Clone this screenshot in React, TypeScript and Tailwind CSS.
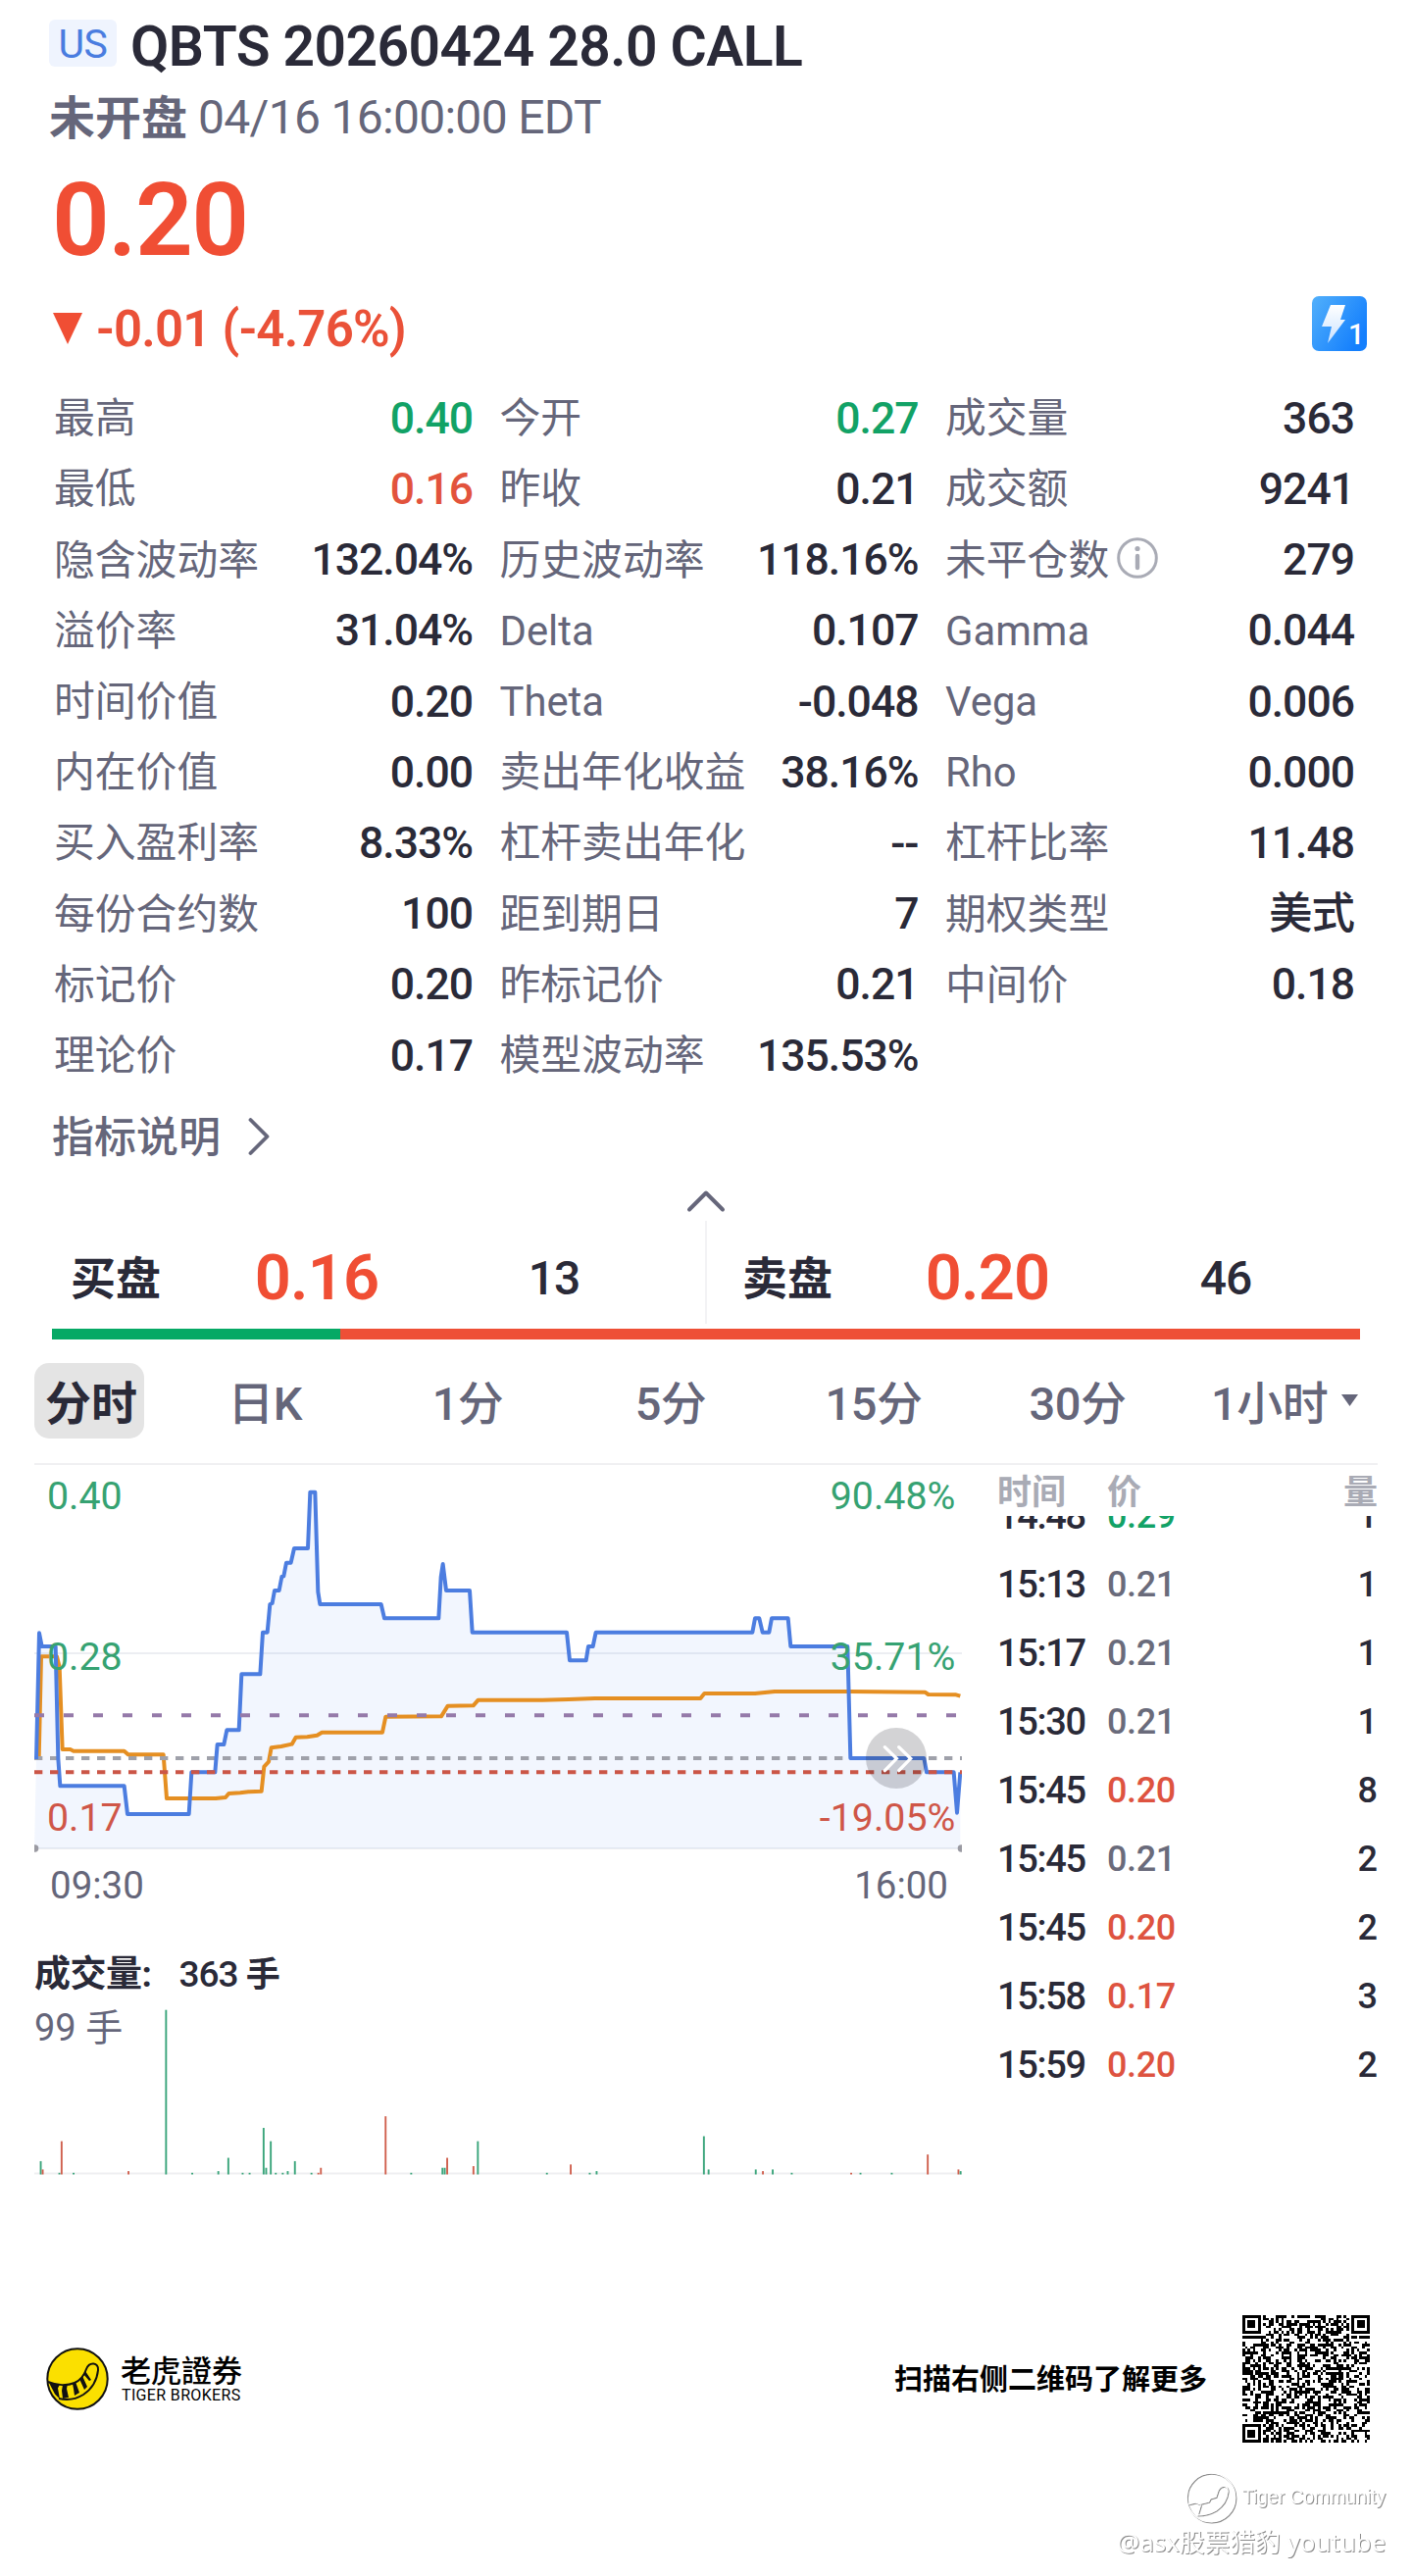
import { ChevronRight, ChevronUp } from "lucide-react";

const stats = [
  ["最高", "0.40", "up"],
  ["今开", "0.27", "up"],
  ["成交量", "363", ""],
  ["最低", "0.16", "down"],
  ["昨收", "0.21", ""],
  ["成交额", "9241", ""],
  ["隐含波动率", "132.04%", ""],
  ["历史波动率", "118.16%", ""],
  ["未平仓数", "279", ""],
  ["溢价率", "31.04%", ""],
  ["Delta", "0.107", ""],
  ["Gamma", "0.044", ""],
  ["时间价值", "0.20", ""],
  ["Theta", "-0.048", ""],
  ["Vega", "0.006", ""],
  ["内在价值", "0.00", ""],
  ["卖出年化收益", "38.16%", ""],
  ["Rho", "0.000", ""],
  ["买入盈利率", "8.33%", ""],
  ["杠杆卖出年化", "--", ""],
  ["杠杆比率", "11.48", ""],
  ["每份合约数", "100", ""],
  ["距到期日", "7", ""],
  ["期权类型", "美式", ""],
  ["标记价", "0.20", ""],
  ["昨标记价", "0.21", ""],
  ["中间价", "0.18", ""],
  ["理论价", "0.17", ""],
  ["模型波动率", "135.53%", ""],
];

const trades = [
  ["14:48", "0.29", "1"],
  ["15:13", "0.21", "1"],
  ["15:17", "0.21", "1"],
  ["15:30", "0.21", "1"],
  ["15:45", "0.20", "8"],
  ["15:45", "0.21", "2"],
  ["15:45", "0.20", "2"],
  ["15:58", "0.17", "3"],
  ["15:59", "0.20", "2"],
];

const priceLine =
  "111,942 120,556 128,597 170,597 178,940 184,1024 380,1024 390,1110 578,1110 586,982 658,982 665,897 685,897 694,853 731,853 739,682 796,682 804,554 818,554 826,468 833,465 840,426 854,426 862,384 868,382 876,341 890,341 900,297 942,297 949,125 964,125 973,430 979,468 1166,468 1176,511 1342,511 1349,385 1355,345 1365,426 1437,426 1445,554 1734,554 1743,640 1793,640 1800,597 1814,597 1823,554 2302,554 2310,511 2323,511 2333,554 2353,554 2361,511 2411,511 2419,597 2593,597 2602,939 2827,939 2835,982 2918,982 2928,1106 2938,982";

const avgLine =
  "119,940 126,628 174,628 182,660 191,912 215,912 225,917 380,917 392,928 500,928 510,1062 660,1062 690,1059 700,1047 735,1045 760,1042 800,1040 808,965 822,950 830,907 860,903 893,896 905,875 940,874 970,869 985,860 1170,860 1180,812 1350,811 1370,779 1448,778 1463,761 1660,761 1740,759 1820,756 2143,756 2155,741 2310,741 2370,735 2600,735 2830,737 2840,744 2925,745 2938,749";

// [x, volume, 1 = up / 0 = down]
const volumes = [
  [41.5, 8, 1], [43.5, 3, 0], [60.5, 1, 1], [62.8, 20, 0], [75, 1, 1],
  [131, 2, 0], [169.3, 99, 1], [196, 1, 1], [222.6, 2, 1], [232.8, 10, 1],
  [247.4, 1, 1], [254.5, 1, 1], [268.8, 28, 1], [271.4, 4, 1], [276.1, 20, 1],
  [281.2, 1, 1], [288.3, 1, 1], [293.4, 2, 1], [300.7, 8, 1], [317.6, 1, 1],
  [324.6, 1, 0], [327.2, 4, 0], [393.2, 35, 0], [419.3, 1, 1], [451.2, 4, 1],
  [453.5, 4, 1], [456, 10, 0], [482.8, 5, 0], [487.3, 20, 1], [557.7, 1, 1],
  [582, 6, 0], [601.4, 1, 1], [608.4, 2, 1], [717.8, 23, 1], [722.6, 3, 1],
  [770.7, 3, 1], [778, 2, 0], [788, 3, 1], [807.4, 1, 1], [868, 1, 0],
  [877.5, 1, 1], [909.4, 1, 1], [946.1, 12, 0], [977.4, 3, 0], [979.6, 2, 1],
];

const QR_SIZE = 49;

function finder(x: number, y: number) {
  const ring = Math.max(Math.abs(x - 3), Math.abs(y - 3));
  return ring === 3 || ring < 2;
}

function qrPath() {
  let seed = 20260424;
  let d = "";
  for (let y = 0; y < QR_SIZE; y++) {
    for (let x = 0; x < QR_SIZE; x++) {
      seed = (seed * 1103515245 + 12345) % 2147483648;
      let on = (seed >> 12) % 100 < 50;
      const far = QR_SIZE - 8;
      if (x < 8 && y < 8) on = x < 7 && y < 7 && finder(x, y);
      else if (x >= far && y < 8) on = x > far && y < 7 && finder(x - far - 1, y);
      else if (x < 8 && y >= far) on = x < 7 && y > far && finder(x, y - far - 1);
      if (on) d += `M${x} ${y}h1v1h-1z`;
    }
  }
  return d;
}

function valueColor(dir: string) {
  if (dir === "up") return "text-[#12a266]";
  if (dir === "down") return "text-[#e2533c]";
  return "text-[#2a2a38]";
}

function priceColor(price: string) {
  if (Number(price) > 0.21) return "text-[#12a266]";
  if (Number(price) < 0.21) return "text-[#de5340]";
  return "text-[#6a6b7b]";
}

function InfoIcon() {
  return (
    <svg className="mb-1 ml-2 size-[42px]" viewBox="0 0 42 42" fill="none">
      <circle cx="21" cy="21" r="19.3" stroke="#a9abb5" strokeWidth="3" />
      <circle cx="21" cy="11.5" r="2.6" fill="#a9abb5" />
      <path d="M21 19v12" stroke="#a9abb5" strokeWidth="4.4" strokeLinecap="round" />
    </svg>
  );
}

function BoltBadge() {
  return (
    <svg className="size-14" viewBox="0 0 56 56">
      <defs>
        <linearGradient id="badge" x1="0" y1="0" x2="1" y2="0.6">
          <stop offset="0" stopColor="#52b0fb" />
          <stop offset="1" stopColor="#147ffd" />
        </linearGradient>
        <linearGradient id="bolt" x1="0" y1="0" x2="0" y2="1">
          <stop offset="0" stopColor="#fff" />
          <stop offset="1" stopColor="#c9e2ff" />
        </linearGradient>
      </defs>
      <rect width="56" height="56" rx="7" fill="url(#badge)" />
      <path d="M19 9h15l-5 15h5L16 48l4-17h-10z" fill="url(#bolt)" />
      <text x="37" y="49" fontSize="29" fontWeight="500" fill="#fff" letterSpacing="0">
        1
      </text>
    </svg>
  );
}

function PriceChart() {
  return (
    <svg className="block h-[396px] w-[946px]" viewBox="105 42 2838 1188">
      <g stroke="#e6e8ee" strokeWidth="5">
        <path d="M105 618H2943" />
        <path d="M105 1215H2943" />
      </g>
      <polygon points={`105,1215 ${priceLine} 2938,1215`} fill="#4a80f0" fillOpacity="0.075" />
      <circle cx="107" cy="1215" r="11" fill="#9a9aa2" />
      <circle cx="2941" cy="1215" r="11" fill="#9a9aa2" />
      <polyline points={avgLine} fill="none" stroke="#e58f22" strokeWidth="12" strokeLinejoin="round" />
      <path d="M105 939H2943" stroke="#9fa1aa" strokeWidth="12" strokeDasharray="25 23" />
      <polyline points={priceLine} fill="none" stroke="#4c7de0" strokeWidth="12" strokeLinejoin="round" />
      <path d="M105 808H2943" stroke="#957aa9" strokeWidth="12" strokeDasharray="30 60" />
      <path d="M105 982H2943" stroke="#cb5647" strokeWidth="12" strokeDasharray="25 23" />
      <g fontSize="118" fill="#36a272">
        <text x="144" y="177">0.40</text>
        <text x="144" y="668">0.28</text>
        <text x="2923" y="177" textAnchor="end">90.48%</text>
        <text x="2923" y="668" textAnchor="end">35.71%</text>
      </g>
      <g fontSize="118" fill="#cf5648">
        <text x="144" y="1160">0.17</text>
        <text x="2923" y="1160" textAnchor="end">-19.05%</text>
      </g>
      <circle cx="2742" cy="939" r="93" fill="#22222c" fillOpacity="0.2" />
      <path
        d="M2707 905l36 35-36 37M2750 905l36 35-36 37"
        fill="none"
        stroke="#fff"
        strokeWidth="10"
        strokeLinecap="round"
      />
    </svg>
  );
}

function VolumeChart() {
  return (
    <svg className="block h-[170px] w-[946px]" viewBox="35 0 946 170">
      <path d="M35 168.5H981" stroke="#efeff2" strokeWidth="2" />
      {volumes.map(([x, v, up]) => (
        <rect
          key={x}
          x={x - 0.9}
          y={169.5 - v * 1.695}
          width="1.9"
          height={v * 1.695}
          fill={up ? "#3aa57b" : "#d0604e"}
        />
      ))}
    </svg>
  );
}

function TigerLogo() {
  return (
    <svg className="size-16" viewBox="0 0 64 64" fill="none" stroke="#111" strokeWidth="2">
      <circle cx="32" cy="32" r="30.7" fill="#fbe000" />
      <path d="M2 35c9 4 20 4 27 1 7-3 10-8 12-14 3-8 13-7 12 1-1 10-6 19-15 25-8 5-17 6-25 4" />
      <path
        d="M3 36l11 1.5-2 4 2 11-5-5zM17 38l5-1-1 5 2 9-6 1-1-8zM27 37l3-2 4 11-5 3-1-7zM34 32l3-3 5 11-3 3zM38 27l2-3 6 9-2 1z"
        fill="#111"
        stroke="none"
      />
    </svg>
  );
}

export default function App() {
  return (
    <div className="h-[2627px] w-[1440px] overflow-hidden bg-white font-['Roboto','Noto_Sans_CJK_SC',sans-serif] text-[#2a2a38]">
      <header className="pl-[50px] pr-[46px]">
        <div className="flex h-[95px] items-center">
          <span className="mb-[7px] flex h-12 w-[69px] items-center justify-center rounded-md bg-[#eff4fe] pt-[3px] text-[41px] tracking-[-0.5px] text-[#4a7de0]">
            US
          </span>
          <h1 className="ml-[14px] text-[57px] leading-none font-semibold tracking-[-0.55px] whitespace-nowrap">
            QBTS 20260424 28.0 CALL
          </h1>
        </div>
        <div className="flex h-[50px] items-center text-[48px] leading-none text-[#65667a]">
          <span className="mr-[11px] text-[47px] font-bold">未开盘</span>
          <span className="tracking-[-0.7px]">04/16 16:00:00 EDT</span>
        </div>
        <div className="flex h-[159px] items-center pl-[3px] text-[103px] leading-none font-semibold tracking-[-1.6px] text-[#f04e34]">
          0.20
        </div>
        <div className="flex h-[62px] items-center text-[51px] leading-none font-semibold tracking-[-0.8px] text-[#ea5138]">
          <svg className="ml-1 size-8" viewBox="0 0 32 32">
            <path d="M0 0h30L15 32z" fill="#f04e34" />
          </svg>
          <span className="ml-3">-0.01 (-4.76%)</span>
          <div className="mb-[10px] ml-auto">
            <BoltBadge />
          </div>
        </div>
      </header>

      <section className="mt-[25px] ml-[55px] grid w-[1326px] auto-rows-[72.2px] grid-cols-[427px_427px_417px] gap-x-[27.5px]">
        {stats.map(([label, value, dir]) => (
          <div key={label} className="flex items-center justify-between leading-none whitespace-nowrap">
            <div className="flex items-center text-[41.8px] text-[#65667a]">
              {label}
              {label === "未平仓数" && <InfoIcon />}
            </div>
            <div className={`text-[44.5px] font-medium tracking-[-1px] ${valueColor(dir)} ${value === "美式" ? "text-[43px] font-bold" : ""}`}>
              {value}
            </div>
          </div>
        ))}
      </section>

      <div className="flex h-24 items-center pl-[53px] text-[43px] leading-none font-medium text-[#65667a]">
        指标说明
        <ChevronRight className="mb-1 ml-[5px] size-[68px]" strokeWidth={1.35} />
      </div>
      <div className="flex h-8 items-center justify-center text-[#65667a]">
        <ChevronUp className="size-[68px]" strokeWidth={1.4} />
      </div>

      <section className="flex h-[114px] items-center pt-3 leading-none font-medium">
        <div className="w-[187px] pl-[72px] text-[46px] font-bold">买盘</div>
        <div className="w-[272px] text-center text-[65px] font-semibold tracking-[-0.8px] text-[#f04e34]">0.16</div>
        <div className="w-[212px] text-center text-[48px] tracking-[-1px]">13</div>
        <div className="mb-3 ml-12 h-[105px] w-[2px] bg-[#f3f3f5]" />
        <div className="w-[150px] pl-9 text-[46px] font-bold">卖盘</div>
        <div className="w-[272px] text-center text-[65px] font-semibold tracking-[-0.8px] text-[#f04e34]">0.20</div>
        <div className="w-[214px] text-center text-[48px] tracking-[-1px]">46</div>
      </section>
      <div className="ml-[53px] flex h-[11px] w-[1334px] bg-[#ee4f36]">
        <div className="w-[294px] bg-[#05a965]" />
      </div>

      <nav className="flex h-[126px] items-center pl-[35px] text-[47px] leading-none font-medium tracking-[-0.5px] whitespace-nowrap text-[#65667a]">
        <div className="flex h-[77px] w-[112px] items-center justify-center rounded-[15px] bg-[#e4e4e4] pt-[6px] pl-1 font-bold tracking-normal text-[#2a2a38]">
          分时
        </div>
        <div className="w-[246px] pt-[6px] text-center">日K</div>
        <div className="w-[168px] pt-[6px] text-center">1分</div>
        <div className="w-[246px] pt-[6px] text-center">5分</div>
        <div className="w-[168px] pt-[6px] text-center">15分</div>
        <div className="w-[248px] pt-[6px] text-center">30分</div>
        <div className="flex items-center pt-[6px] pl-3">
          1小时
          <svg className="mb-2 ml-[14px] h-[12px] w-[17px]" viewBox="0 0 17 12">
            <path d="M0 0h17L8.5 12z" fill="#65667a" />
          </svg>
        </div>
      </nav>

      <main className="ml-[35px] flex w-[1370px] justify-between border-t-2 border-[#f0f0f2]">
        <div className="w-[946px]">
          <PriceChart />
          <div className="flex h-[66px] items-center justify-between pr-[14px] pl-4 text-[38.5px] text-[#65667a]">
            <span>09:30</span>
            <span>16:00</span>
          </div>
          <div className="mt-[31px] flex h-[54px] items-center text-[37px] leading-none font-medium tracking-[-0.5px]">
            <span className="font-bold">成交量:</span>
            <span className="ml-7 tracking-[-1px]">
              363 <span className="text-[35px] font-bold">手</span>
            </span>
          </div>
          <div className="flex h-[54px] items-center text-[38px] leading-none text-[#65667a]">99 手</div>
          <div className="-mt-[47px]">
            <VolumeChart />
          </div>
        </div>

        <div className="w-[388px]">
          <div className="flex h-[52px] items-center pt-[6px] text-[35px] leading-none font-bold text-[#a9abb5]">
            <span className="w-[112px]">时间</span>
            <span>价</span>
            <span className="ml-auto">量</span>
          </div>
          <div className="overflow-hidden">
            <div className="-mt-[35px]">
              {trades.map(([time, price, qty], i) => (
                <div key={i} className="flex h-[70px] items-center text-[36px] leading-none font-medium">
                  <span className="w-[112px] text-[38px] tracking-[-1.3px]">{time}</span>
                  <span className={`tracking-[-0.4px] ${priceColor(price)}`}>{price}</span>
                  <span className="ml-auto">{qty}</span>
                </div>
              ))}
            </div>
          </div>
        </div>
      </main>

      <footer className="mt-[143px] ml-[47px] flex h-[130px] w-[1350px] items-center text-black">
        <TigerLogo />
        <div className="ml-3 leading-none">
          <div className="font-['Noto_Sans_CJK_TC',sans-serif] text-[31px] leading-[32px] font-medium">老虎證券</div>
          <div className="pt-[2px] pl-[1px] text-[16px] leading-[18px] tracking-[0.35px]">TIGER BROKERS</div>
        </div>
        <div className="ml-auto pt-1 text-[29px] font-bold">扫描右侧二维码了解更多</div>
        <svg className="ml-9 size-[130px]" viewBox="0 0 49 49" shapeRendering="crispEdges">
          <path d={qrPath()} fill="#000" />
        </svg>
      </footer>

      <div className="mt-[30px] flex flex-col items-end pr-[27px] leading-none text-white">
        <div className="flex items-center drop-shadow-[1px_1px_0.5px_#8a8a8a]">
          <svg className="size-[52px]" viewBox="0 0 64 64" fill="none" stroke="#fff" strokeWidth="1.6">
            <circle cx="32" cy="32" r="30.5" />
            <path d="M4 40l9-2 4 2 12-3 2-4 7-2 3-9c4-7 12-5 12 2-1 10-6 18-15 24-7 4-14 6-23 6l4-13" />
          </svg>
          <span className="ml-[6px] font-['Liberation_Sans'] text-[19.5px] tracking-[-0.1px]">Tiger Community</span>
        </div>
        <div className="mt-[7px] font-['Noto_Sans','Noto_Sans_CJK_SC',sans-serif] text-[25.8px] drop-shadow-[1px_1px_0.5px_#8a8a8a]">
          @asx股票猎豹 youtube
        </div>
      </div>
    </div>
  );
}
